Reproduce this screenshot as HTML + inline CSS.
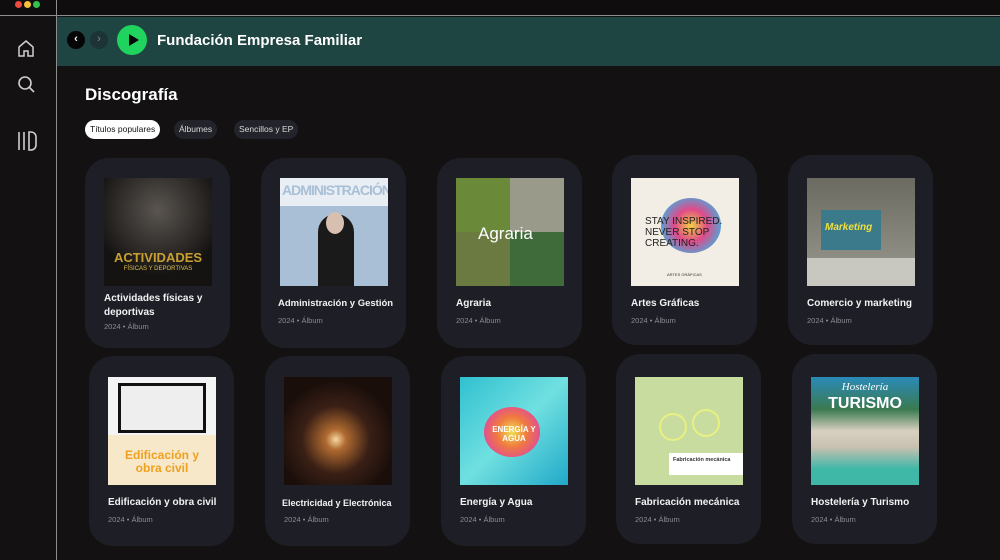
<!DOCTYPE html><html><head><meta charset="utf-8"><style>
*{margin:0;padding:0;box-sizing:border-box}
body{width:1000px;height:560px;background:#131112;font-family:"Liberation Sans",sans-serif;position:relative;overflow:hidden;color:#fff}
.a{position:absolute}
.card{position:absolute;width:145px;height:190px;background:#1e1f26;border-radius:24px}
.img{position:absolute;left:19px;top:20px;width:108px;height:108px;overflow:hidden}
.t{position:absolute;left:19px;top:134px;width:124px;font-size:10px;font-weight:bold;line-height:14px;color:#f2f2f2;white-space:nowrap}
.m{position:absolute;left:19px;font-size:7.5px;color:#8a8b92}
.pill{position:absolute;top:120px;height:19px;border-radius:10px;font-size:8.5px;line-height:19px;padding:0 5px;background:#23242b;color:#d8d8d8}
</style></head><body>
<div class="a" style="left:0;top:0;width:1000px;height:16px;background:#0f0d0e;border-bottom:1px solid #8e8e8e"></div>
<div class="a" style="left:56px;top:0;width:1px;height:560px;background:#8e8e8e"></div>
<div class="a" style="left:15px;top:1px;width:7px;height:7px;border-radius:50%;background:#ec4a3f"></div>
<div class="a" style="left:24px;top:1px;width:7px;height:7px;border-radius:50%;background:#f4bf3a"></div>
<div class="a" style="left:33px;top:1px;width:7px;height:7px;border-radius:50%;background:#35c24b"></div>
<svg class="a" style="left:16px;top:38px" width="20" height="20" viewBox="0 0 20 20" fill="none" stroke="#cfcfcf" stroke-width="1.5"><path d="M3 9L10 3l7 6v9h-5v-5H8v5H3z"/></svg>
<svg class="a" style="left:16px;top:74px" width="20" height="20" viewBox="0 0 20 20" fill="none" stroke="#cfcfcf" stroke-width="1.6"><circle cx="9" cy="9" r="6"/><path d="M13.5 13.5L18 18"/></svg>
<svg class="a" style="left:16px;top:130px" width="22" height="22" viewBox="0 0 22 22" fill="none" stroke="#cfcfcf" stroke-width="1.6"><path d="M3 2v18M8 2v18M13 2v18h2a5 5 0 005-5V7a5 5 0 00-5-5z"/></svg>
<div class="a" style="left:57px;top:17px;width:943px;height:49px;background:#1e4542"></div>
<div class="a" style="left:67px;top:31px;width:18px;height:18px;border-radius:50%;background:#050505;color:#fff;font-size:11px;text-align:center;line-height:17px;font-weight:bold">‹</div>
<div class="a" style="left:90px;top:31px;width:18px;height:18px;border-radius:50%;background:#1d3335;color:#7a8e8e;font-size:11px;text-align:center;line-height:17px">›</div>
<div class="a" style="left:117px;top:25px;width:30px;height:30px;border-radius:50%;background:#1fd35e"></div>
<svg class="a" style="left:117px;top:25px" width="30" height="30"><path d="M12 9l10 6-10 6z" fill="#050505"/></svg>
<div class="a" style="left:157px;top:32px;font-size:15px;font-weight:bold">Fundación Empresa Familiar</div>
<div class="a" style="left:85px;top:85px;font-size:17px;font-weight:bold">Discografía</div>
<div class="pill" style="left:85px;background:#fff;color:#111">Títulos populares</div>
<div class="pill" style="left:174px">Álbumes</div>
<div class="pill" style="left:234px">Sencillos y EP</div>

<div class="card" style="left:85px;top:158px"><div class="img" style="background:radial-gradient(circle at 50% 30%,#5a5550,#151312 70%)"><div class="a" style="left:0;top:72px;width:108px;text-align:center;font-size:13px;font-weight:bold;color:#c9a030">ACTIVIDADES</div><div class="a" style="left:0;top:88px;width:108px;text-align:center;font-size:6px;color:#e0c050">FÍSICAS Y DEPORTIVAS</div></div><div class="t" style="white-space:normal;width:120px">Actividades físicas y deportivas</div><div class="m" style="top:164px">2024 • Álbum</div></div>
<div class="card" style="left:261px;top:158px"><div class="img" style="background:#a9bfd6"><div class="a" style="left:0;top:0;width:108px;height:28px;background:#e8eef4"></div><div class="a" style="left:2px;top:4px;font-size:14px;font-weight:bold;color:#a9bfd6;letter-spacing:-1px">ADMINISTRACIÓN</div><div class="a" style="left:38px;top:36px;width:36px;height:72px;border-radius:18px 18px 0 0;background:#1a1a1a"></div><div class="a" style="left:46px;top:34px;width:18px;height:22px;border-radius:50%;background:#d8c0b0"></div></div><div class="t" style="top:139px;left:17px;font-size:9.5px">Administración y Gestión</div><div class="m" style="top:158px;left:17px">2024 • Álbum</div></div>
<div class="card" style="left:437px;top:158px"><div class="img" style="background:linear-gradient(90deg,#6a8a3a 50%,#9a9a8a 50%)"><div class="a" style="left:0;top:54px;width:108px;height:54px;background:linear-gradient(90deg,#6a7a40 50%,#3f6a3a 50%)"></div><div class="a" style="left:22px;top:46px;font-size:17px;color:#fff">Agraria</div></div><div class="t" style="top:139px">Agraria</div><div class="m" style="top:158px">2024 • Álbum</div></div>
<div class="card" style="left:612px;top:155px"><div class="img" style="background:#f2eee6;top:23px"><div class="a" style="left:30px;top:20px;width:60px;height:55px;border-radius:50%;background:radial-gradient(circle,#f0d040,#e04a8a,#40b0e0 80%,transparent 81%)"></div><div class="a" style="left:14px;top:38px;font-size:10px;line-height:11px;color:#222">STAY INSPIRED.<br>NEVER STOP<br>CREATING.</div><div class="a" style="left:36px;top:94px;font-size:4px;color:#333">ARTES GRÁFICAS</div></div><div class="t" style="top:142px">Artes Gráficas</div><div class="m" style="top:161px">2024 • Álbum</div></div>
<div class="card" style="left:788px;top:155px"><div class="img" style="background:linear-gradient(#6a6a60,#9a9a90);top:23px"><div class="a" style="left:14px;top:32px;width:60px;height:40px;background:#3a7a8a"></div><div class="a" style="left:18px;top:44px;font-size:10px;font-style:italic;font-weight:bold;color:#f0e040">Marketing</div><div class="a" style="left:0;top:80px;width:108px;height:28px;background:#c8c8c0"></div></div><div class="t" style="top:142px">Comercio y marketing</div><div class="m" style="top:161px">2024 • Álbum</div></div>

<div class="card" style="left:89px;top:356px"><div class="img" style="background:#f4f4f4;top:21px"><div class="a" style="left:10px;top:6px;width:88px;height:50px;background:#222;border:3px solid #111"></div><div class="a" style="left:13px;top:9px;width:82px;height:44px;background:#eee"></div><div class="a" style="left:0;top:58px;width:108px;height:50px;background:#f6e8c8"></div><div class="a" style="left:0;top:72px;width:108px;text-align:center;font-size:12px;font-weight:bold;color:#f0a020;line-height:13px">Edificación y<br>obra civil</div></div><div class="t" style="top:140px">Edificación y obra civil</div><div class="m" style="top:159px">2024 • Álbum</div></div>
<div class="card" style="left:265px;top:356px"><div class="img" style="background:radial-gradient(circle at 48% 58%,#f8d8a0 0,#b06a30 12%,#3a2016 40%,#1a0e0a 70%);top:21px"></div><div class="t" style="top:140px;left:17px;font-size:9px">Electricidad y Electrónica</div><div class="m" style="top:159px">2024 • Álbum</div></div>
<div class="card" style="left:441px;top:356px"><div class="img" style="background:linear-gradient(135deg,#30c0d0,#70e0e0,#20a8c8);top:21px"><div class="a" style="left:24px;top:30px;width:56px;height:50px;border-radius:50%;background:radial-gradient(circle,#f0e050,#f07a40,#e04a9a 80%,transparent 82%)"></div><div class="a" style="left:0;top:48px;width:108px;text-align:center;font-size:8px;font-weight:bold;line-height:9px">ENERGÍA Y<br>AGUA</div></div><div class="t" style="top:140px">Energía y Agua</div><div class="m" style="top:159px">2024 • Álbum</div></div>
<div class="card" style="left:616px;top:354px"><div class="img" style="background:#c8dca0;top:23px"><div class="a" style="left:24px;top:36px;width:28px;height:28px;border-radius:50%;border:2px solid #e8f080"></div><div class="a" style="left:57px;top:32px;width:28px;height:28px;border-radius:50%;border:2px solid #e8f080"></div><div class="a" style="left:34px;top:76px;width:74px;height:22px;background:#fff"></div><div class="a" style="left:38px;top:80px;font-size:5.5px;font-weight:bold;color:#333">Fabricación mecánica</div></div><div class="t" style="top:142px">Fabricación mecánica</div><div class="m" style="top:161px">2024 • Álbum</div></div>
<div class="card" style="left:792px;top:354px"><div class="img" style="background:linear-gradient(#2a8ab8 0,#3a7a50 30%,#d8d0c0 50%,#c8c0b0 65%,#40b8a8 85%);top:23px"><div class="a" style="left:0;top:4px;width:108px;text-align:center;font-size:11px;font-style:italic;font-family:'Liberation Serif',serif">Hostelería</div><div class="a" style="left:0;top:18px;width:108px;text-align:center;font-size:16px;font-weight:bold">TURISMO</div></div><div class="t" style="top:142px">Hostelería y Turismo</div><div class="m" style="top:161px">2024 • Álbum</div></div>
</body></html>
